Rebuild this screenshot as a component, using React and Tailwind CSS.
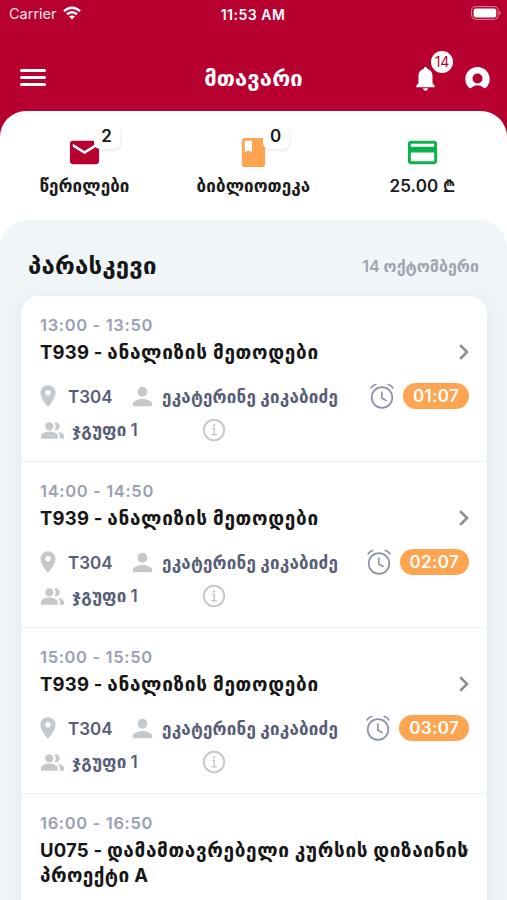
import { MdEmail, MdBook, MdCreditCard, MdLocationOn, MdPerson, MdPeopleAlt } from 'react-icons/md';

const lessons = [
  { time: '13:00 - 13:50', code: 'T939', name: 'ანალიზის მეთოდები', left: '01:07' },
  { time: '14:00 - 14:50', code: 'T939', name: 'ანალიზის მეთოდები', left: '02:07' },
  { time: '15:00 - 15:50', code: 'T939', name: 'ანალიზის მეთოდები', left: '03:07' },
];

function StatusBar() {
  return (
    <div className="grid h-[28px] grid-cols-3 items-center pr-[6px] pl-[9px] text-white">
      <div className="flex items-center gap-[6px]">
        <span className="text-[14.5px] text-white/90">Carrier</span>
        <svg viewBox="0 0 18 14" className="-mt-[2px] h-[14px] w-[18px]" fill="none" stroke="currentColor" strokeWidth="2.3">
          <path d="M1 5.2C5.5.6 12.5.6 17 5.2" />
          <path d="M4 8.4c2.8-2.9 7.2-2.9 10 0" />
          <path d="M9 13.6l2.9-3c-1.6-1.5-4.2-1.5-5.8 0z" fill="currentColor" stroke="none" />
        </svg>
      </div>
      <span className="-ml-[4px] text-center text-[14px] font-semibold tracking-[0.5px] whitespace-nowrap">11:53 AM</span>
      <svg viewBox="0 0 30 14" className="-mt-[2px] h-[14px] w-[30px] justify-self-end">
        <rect x="0.6" y="0.6" width="26.5" height="12.8" rx="4" fill="none" stroke="white" strokeOpacity="0.5" />
        <rect x="2.6" y="2.4" width="22.6" height="9.2" rx="2" fill="white" />
        <path d="M28.3 4.8c1.6.8 1.6 3.6 0 4.4z" fill="white" fillOpacity="0.6" />
      </svg>
    </div>
  );
}

function Header() {
  return (
    <div className="grid h-[83px] grid-cols-3 items-center px-[17px] pt-[16px] text-white">
      <div className="flex w-[26px] translate-x-[3px] flex-col gap-[4px]">
        <div className="h-[3px] rounded-full bg-white" />
        <div className="h-[3px] rounded-full bg-white" />
        <div className="h-[3px] rounded-full bg-white" />
      </div>
      <h1 className="pt-[1px] text-center text-[22px] font-bold tracking-[0.1px] whitespace-nowrap">მთავარი</h1>
      <div className="flex translate-y-[1px] items-center justify-end gap-[30px]">
        <div className="relative">
          <svg viewBox="0 0 19 24" className="h-[24px] w-[19px]" fill="white">
            <path d="M9.5 0c-1 0-1.7.7-1.7 1.7C4.6 2.5 2.5 5.3 2.5 9v7.2L.3 18.7v1.5h18.4v-1.5l-2.2-2.5V9c0-3.7-2.1-6.5-5.3-7.3 0-1-.7-1.7-1.7-1.7z" />
            <path d="M7 21.3h5c-.2 1.5-1.2 2.5-2.5 2.5S7.2 22.8 7 21.3z" />
          </svg>
          <span className="absolute -top-[16px] left-[15px] flex h-[22px] w-[22px] items-center justify-center rounded-full bg-white text-[14px] text-[#b80030]">
            14
          </span>
        </div>
        <svg viewBox="0 0 25 25" className="h-[25px] w-[25px]" fill="white">
          <path fillRule="evenodd" d="M12.5 1C5.8 1 .3 6.4.3 13c0 3.7 1.6 7 4.2 9.2 1 .2 1.8-.2 2.6-.9 1.4-1.3 3.3-2 5.4-2s4 .7 5.4 2c.8.7 1.6 1.1 2.6.9A12 12 0 0 0 24.7 13C24.7 6.4 19.2 1 12.5 1zm0 6.500a5 5 0 1 1 0 10 5 5 0 0 1 0-10z" />
        </svg>
      </div>
    </div>
  );
}

function Shortcut({ icon, count, children }) {
  return (
    <div className="flex flex-col items-center">
      <div className="relative flex h-[36px] w-[36px] items-center justify-center">
        {icon}
        {count !== undefined && (
          <span className="absolute -top-[10px] left-[27px] flex h-[25px] w-[26px] items-center justify-center rounded-[6px] bg-white text-[17px] font-semibold text-[#191919] shadow-[1px_2px_3px_rgba(0,0,0,0.08)]">
            {count}
          </span>
        )}
      </div>
      <div className="mt-[4px] flex h-[26px] items-center text-[17px] font-bold tracking-[0.1px] whitespace-nowrap text-[#1b1b1b]">{children}</div>
    </div>
  );
}

function Chevron() {
  return (
    <svg viewBox="0 0 10 16" className="h-[16px] w-[10px] shrink-0" fill="none" stroke="#8d8d90" strokeWidth="2.6">
      <path d="M1.2 1.2L8 8l-6.8 6.8" />
    </svg>
  );
}

function AlarmIcon() {
  return (
    <svg viewBox="0 0 24 26" className="h-[26px] w-[24px]" fill="none" stroke="#8b92a9" strokeWidth="1.7" strokeLinecap="round" strokeLinejoin="round">
      <circle cx="12" cy="14.5" r="10.3" />
      <path d="M11.8 9v6l4.2 2.5" />
      <path d="M1.2 4.8c1-1.6 2.6-2.8 4.6-3.3M22.8 4.8c-1-1.6-2.6-2.8-4.6-3.3" />
    </svg>
  );
}

function InfoIcon() {
  return (
    <svg viewBox="0 0 24 24" className="h-[24px] w-[24px]" fill="none" stroke="#c6c8ca" strokeWidth="1.9">
      <circle cx="12" cy="12" r="10.2" />
      <path d="M10 10.5h2.3v6M9.5 16.7h5.2" strokeWidth="1.5" />
      <circle cx="12" cy="7.3" r="1.2" fill="#c6c8ca" stroke="none" />
    </svg>
  );
}

function Lesson({ lesson }) {
  return (
    <div className="h-[166px] border-b border-[#edf2f5] pt-[18px] pr-[18px] pl-[19px]">
      <div className="h-[22px] text-[16.5px] leading-[22px] font-semibold tracking-[0.65px] text-[#9a9fb3]">{lesson.time}</div>
      <div className="flex h-[32px] items-center justify-between">
        <h3 className="pt-[2px] text-[18.5px] font-bold tracking-[0.2px] whitespace-nowrap text-[#161616]">
          {lesson.code} - <span className="text-[19px] tracking-[0.7px]">{lesson.name}</span>
        </h3>
        <Chevron />
      </div>
      <div className="mt-[11px] flex h-[34px] items-center text-[#585d78]">
        <MdLocationOn className="-ml-[5px] h-[26px] w-[26px] text-[#c6c9cb]" />
        <span className="ml-[7px] w-[60px] pt-[3px] text-[17px] font-semibold">T304</span>
        <MdPerson className="h-[29px] w-[29px] text-[#c6c9cb]" />
        <span className="ml-[5px] pt-[3px] text-[17px] font-bold tracking-[0.2px] whitespace-nowrap">ეკატერინე კიკაბიძე</span>
        <div className="ml-auto flex items-center gap-[9px]">
          <AlarmIcon />
          <span className="flex h-[26px] items-center rounded-full bg-[#ffa551] px-[10px] pt-[1px] text-[17px] font-semibold tracking-[0.3px] text-white">{lesson.left}</span>
        </div>
      </div>
      <div className="mt-[1px] flex h-[32px] items-center text-[#585d78]">
        <MdPeopleAlt className="h-[25px] w-[25px] text-[#c6c9cb]" />
        <span className="ml-[7px] w-[130px] pt-[2px] text-[17px] font-bold tracking-[0.1px] whitespace-nowrap">
          ჯგუფი <span className="font-semibold">1</span>
        </span>
        <InfoIcon />
      </div>
    </div>
  );
}

export default function App() {
  return (
    <div className="h-[900px] w-[507px] overflow-hidden bg-[#b80030] font-['Inter','DejaVu_Sans',sans-serif]">
      <StatusBar />
      <Header />
      <div className="h-[789px] overflow-hidden rounded-t-[26px] bg-white">
        {/* Shortcuts */}
        <div className="grid h-[109px] grid-cols-3 pt-[23px]">
          <Shortcut icon={<MdEmail className="h-[35px] w-[35px] text-[#b80030]" />} count={2}>
            წერილები
          </Shortcut>
          <Shortcut icon={<MdBook className="h-[35px] w-[35px] text-[#ffa551]" />} count={0}>
            ბიბლიოთეკა
          </Shortcut>
          <Shortcut icon={<MdCreditCard className="h-[35px] w-[35px] text-[#0db14b]" />}>
            <span className="text-[17px] font-semibold tracking-[0.1px]">25.00 ₾</span>
          </Shortcut>
        </div>

        {/* Schedule */}
        <div className="h-[680px] rounded-t-[28px] bg-[#f0f5f8]">
          <div className="flex h-[76px] items-center justify-between pt-[16px] pr-[28px] pl-[28px]">
            <h2 className="text-[24px] font-bold tracking-[0.2px] whitespace-nowrap text-[#161616]">პარასკევი</h2>
            <span className="text-[16px] font-semibold whitespace-nowrap text-[#a0a5b0]">14 ოქტომბერი</span>
          </div>
          <div className="mr-[20px] ml-[21px] h-[620px] rounded-t-[18px] bg-white shadow-[0_4px_18px_rgba(0,0,0,0.07)]">
            {lessons.map((lesson) => (
              <Lesson key={lesson.time} lesson={lesson} />
            ))}
            <div className="relative pt-[18px] pl-[19px]">
              <div className="h-[22px] text-[16.5px] leading-[22px] font-semibold tracking-[0.65px] text-[#9a9fb3]">16:00 - 16:50</div>
              <div className="absolute top-[48px] right-[18px]">
                <Chevron />
              </div>
              <h3 className="relative mt-[4px] text-[18.5px] leading-[24px] font-bold tracking-[0.2px] whitespace-nowrap text-[#161616]">
                U075 - <span className="text-[19px] tracking-[0.62px]">დამამთავრებელი კურსის დიზაინის</span>
                <br />
                <span className="text-[19px] tracking-[0.4px]">პროექტი</span> A
              </h3>
            </div>
          </div>
        </div>
      </div>
    </div>
  );
}
